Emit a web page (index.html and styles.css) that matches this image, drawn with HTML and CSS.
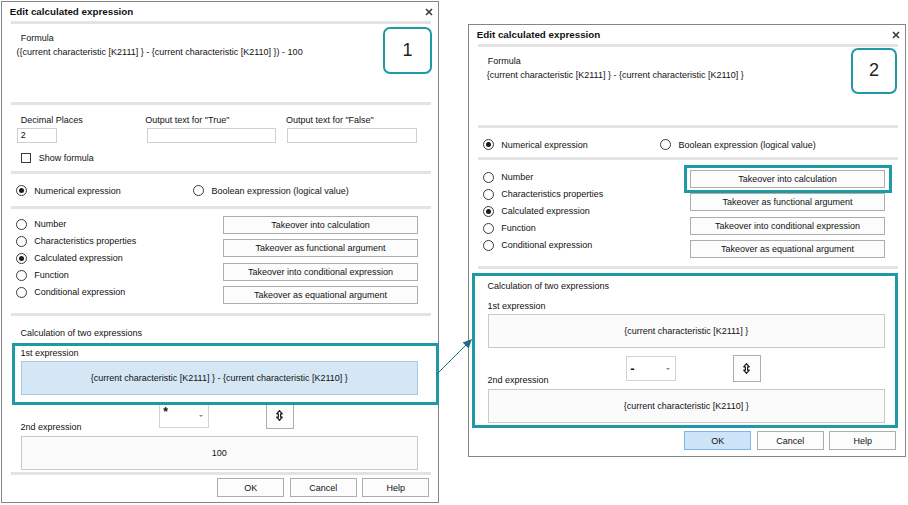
FILE: index.html
```html
<!DOCTYPE html>
<html lang="en">

<head>
    <meta charset="UTF-8">
    <meta name="viewport" content="width=device-width, initial-scale=1.0">
    <title>Edit calculated expression</title>
    <link rel="stylesheet" href="styles.css">
</head>

<body>
    <div class="desk">

        <!-- step 1 -->
        <div class="dialog dialog-one">
            <div class="titlebar">
                <span class="title">Edit calculated expression</span>
                <svg class="close" width="8" height="8" viewBox="0 0 8 8"><path d="M1 1L7 7M7 1L1 7" /></svg>
            </div>
            <div class="sep"></div>
            <div class="formula">
                <div>Formula</div>
                <div class="formula-text">({current characteristic [K2111] } - {current characteristic [K2110] }) - 100</div>
            </div>
            <div class="sep"></div>
            <div class="options">
                <div class="fields">
                    <div class="field f-dec">
                        <div class="field-label">Decimal Places</div>
                        <div class="input">2</div>
                    </div>
                    <div class="field f-true">
                        <div class="field-label">Output text for "True"</div>
                        <div class="input"></div>
                    </div>
                    <div class="field f-false">
                        <div class="field-label">Output text for "False"</div>
                        <div class="input"></div>
                    </div>
                </div>
                <div class="check"><span class="box"></span>Show formula</div>
            </div>
            <div class="sep"></div>
            <div class="kind">
                <div class="radio checked"><span class="dot"></span>Numerical expression</div>
                <div class="radio"><span class="dot"></span>Boolean expression (logical value)</div>
            </div>
            <div class="sep"></div>
            <div class="source">
                <div class="choices">
                    <div class="radio"><span class="dot"></span>Number</div>
                    <div class="radio"><span class="dot"></span>Characteristics properties</div>
                    <div class="radio checked"><span class="dot"></span>Calculated expression</div>
                    <div class="radio"><span class="dot"></span>Function</div>
                    <div class="radio"><span class="dot"></span>Conditional expression</div>
                </div>
                <div class="actions">
                    <div class="btn">Takeover into calculation</div>
                    <div class="btn">Takeover as functional argument</div>
                    <div class="btn">Takeover into conditional expression</div>
                    <div class="btn">Takeover as equational argument</div>
                </div>
            </div>
            <div class="sep"></div>
            <div class="calc">
                <div>Calculation of two expressions</div>
                <div class="calc-label">1st expression</div>
                <div class="expr active">{current characteristic [K2111] } - {current characteristic [K2110] }</div>
                <div class="mid">
                    <div class="mid-label">2nd expression</div>
                    <div class="combo"><span class="combo-value">*</span><span class="caret"></span></div>
                    <div class="btn swap">
                        <svg width="7" height="11" viewBox="0 0 7 11"><path d="M3.5 0.6L6.3 3.8H4.6V7.2H6.3L3.5 10.4L0.7 7.2H2.4V3.8H0.7Z" /></svg>
                    </div>
                </div>
                <div class="expr">100</div>
            </div>
            <div class="sep"></div>
            <div class="footer">
                <div class="btn">OK</div>
                <div class="btn">Cancel</div>
                <div class="btn">Help</div>
            </div>

            <div class="step">1</div>
            <div class="mark mark-first"></div>
        </div>

        <!-- step 2 -->
        <div class="dialog dialog-two">
            <div class="titlebar">
                <span class="title">Edit calculated expression</span>
                <svg class="close" width="8" height="8" viewBox="0 0 8 8"><path d="M1 1L7 7M7 1L1 7" /></svg>
            </div>
            <div class="sep"></div>
            <div class="formula">
                <div>Formula</div>
                <div class="formula-text">{current characteristic [K2111] } - {current characteristic [K2110] }</div>
            </div>
            <div class="sep"></div>
            <div class="kind">
                <div class="radio checked"><span class="dot"></span>Numerical expression</div>
                <div class="radio"><span class="dot"></span>Boolean expression (logical value)</div>
            </div>
            <div class="sep"></div>
            <div class="source">
                <div class="choices">
                    <div class="radio"><span class="dot"></span>Number</div>
                    <div class="radio"><span class="dot"></span>Characteristics properties</div>
                    <div class="radio checked"><span class="dot"></span>Calculated expression</div>
                    <div class="radio"><span class="dot"></span>Function</div>
                    <div class="radio"><span class="dot"></span>Conditional expression</div>
                </div>
                <div class="actions">
                    <div class="btn">Takeover into calculation</div>
                    <div class="btn">Takeover as functional argument</div>
                    <div class="btn">Takeover into conditional expression</div>
                    <div class="btn">Takeover as equational argument</div>
                </div>
            </div>
            <div class="sep"></div>
            <div class="calc">
                <div>Calculation of two expressions</div>
                <div class="calc-label">1st expression</div>
                <div class="expr">{current characteristic [K2111] }</div>
                <div class="mid">
                    <div class="mid-label">2nd expression</div>
                    <div class="combo"><span class="combo-value minus">-</span><span class="caret"></span></div>
                    <div class="btn swap">
                        <svg width="7" height="11" viewBox="0 0 7 11"><path d="M3.5 0.6L6.3 3.8H4.6V7.2H6.3L3.5 10.4L0.7 7.2H2.4V3.8H0.7Z" /></svg>
                    </div>
                </div>
                <div class="expr">{current characteristic [K2110] }</div>
            </div>
            <div class="sep"></div>
            <div class="footer">
                <div class="btn default">OK</div>
                <div class="btn">Cancel</div>
                <div class="btn">Help</div>
            </div>

            <div class="step">2</div>
            <div class="mark mark-button"></div>
            <div class="mark mark-calc"></div>
        </div>

        <svg class="arrow" width="908" height="505" viewBox="0 0 908 505">
            <line x1="436" y1="375" x2="467" y2="344" />
            <polygon points="472,339 468.6,348.4 462.6,342.4" />
        </svg>
    </div>
</body>

</html>
```

FILE: styles.css
```css
body {
    margin: 0;
    background: #fff;
    font-family: 'Liberation Sans', Arial, sans-serif;
    font-size: 9px;
    color: #111;
}

.desk {
    position: relative;
    width: 908px;
    height: 505px;
    overflow: hidden;
}

.dialog {
    position: absolute;
    box-sizing: border-box;
    width: 438px;
    border: 1px solid #858585;
    background: #fff;
    display: flex;
    flex-direction: column;
}

.dialog-one {
    left: 1px;
    top: 1px;
    height: 502px;
}

.dialog-two {
    left: 468px;
    top: 24px;
    height: 433px;
}

.titlebar {
    height: 19px;
    flex: none;
    display: flex;
    align-items: center;
    justify-content: space-between;
    padding: 0 5px 0 7.7px;
}

.title {
    font-weight: bold;
    font-size: 9.8px;
    color: #111;
}

.close path {
    stroke: #3a3a3a;
    stroke-width: 1.6;
}

.sep {
    flex: none;
    height: 3px;
    background: #e3e3e3;
    margin: 0 7px 0 9px;
}

.formula {
    flex: none;
    height: 78px;
    box-sizing: border-box;
    padding: 8px 0 0 18.7px;
    line-height: 13px;
}

.formula-text {
    margin: 0.5px 0 0 -4.2px;
}

.dialog-two .formula-text {
    margin-left: -1px;
}

/* decimal places / output texts */

.options {
    flex: none;
    height: 66px;
    box-sizing: border-box;
    padding-top: 8.5px;
    line-height: 13px;
}

.fields {
    display: grid;
    grid-template-columns: 130px 140.6px 130px;
    padding-left: 14.7px;
}

.input {
    box-sizing: border-box;
    height: 15px;
    margin-top: 1.5px;
    border: 1px solid #cfcfcf;
    background: #fff;
    padding-left: 3px;
    line-height: 13px;
}

.f-dec .field-label {
    margin-left: 4px;
}

.f-dec .input {
    width: 40px;
}

.f-true .field-label,
.f-false .field-label {
    margin-left: -1.4px;
}

.f-true .input {
    width: 129px;
}

.f-false .input {
    width: 130px;
}

.check {
    display: flex;
    align-items: center;
    margin: 8.5px 0 0 18.7px;
    height: 13px;
}

.check .box {
    width: 10px;
    height: 10px;
    box-sizing: border-box;
    border: 1px solid #3a3a3a;
    margin-right: 8px;
}

/* radios */

.radio {
    display: flex;
    align-items: center;
    height: 13px;
}

.dot {
    position: relative;
    flex: none;
    width: 11px;
    height: 11px;
    box-sizing: border-box;
    border: 1px solid #3a3a3a;
    border-radius: 50%;
    margin-right: 7.3px;
    background: #fff;
}

.radio.checked .dot::after {
    content: '';
    position: absolute;
    left: 2px;
    top: 2px;
    width: 5px;
    height: 5px;
    border-radius: 50%;
    background: #1a1a1a;
}

.kind {
    flex: none;
    height: 32px;
    box-sizing: border-box;
    padding: 10px 0 0 14px;
    display: grid;
    grid-template-columns: 177.3px auto;
}

.dialog-two .kind {
    height: 29px;
}

.source {
    flex: none;
    height: 104px;
    display: flex;
    align-items: flex-start;
}

.dialog-two .source {
    height: 106px;
}

.choices {
    box-sizing: border-box;
    width: 220.7px;
    padding: 6.5px 0 0 14px;
}

.dialog-two .choices {
    padding-top: 8.5px;
}

.choices .radio {
    height: 17px;
}

.actions {
    width: 195.6px;
    padding-top: 7px;
    display: flex;
    flex-direction: column;
    gap: 5.33px;
}

.dialog-two .actions {
    padding-top: 10px;
}

.btn {
    box-sizing: border-box;
    height: 18px;
    border: 1px solid #adadad;
    background: #fcfcfc;
    display: flex;
    align-items: center;
    justify-content: center;
    color: #111;
}

/* two expressions */

.calc {
    flex: none;
    height: 156px;
    box-sizing: border-box;
    padding: 11px 0 0 18.5px;
    line-height: 13px;
}

.calc-label {
    margin-top: 7px;
}

.expr {
    box-sizing: border-box;
    width: 397.5px;
    height: 34px;
    margin-top: 1px;
    border: 1px solid #c9c9c9;
    background: #fbfbfb;
    display: flex;
    align-items: center;
    justify-content: center;
}

.expr.active {
    background: #d5e6f5;
    border-color: #a8c9e6;
}

.mid {
    height: 40px;
    display: flex;
    align-items: flex-start;
}

.mid-label {
    width: 138.8px;
    margin-top: 26px;
}

.combo {
    box-sizing: border-box;
    width: 49.4px;
    height: 25px;
    margin-top: 8px;
    border: 1px solid #d3d3d3;
    background: #fff;
    display: flex;
    align-items: center;
    justify-content: space-between;
    padding: 0 5px 0 3px;
}

.combo-value {
    font-size: 12px;
    font-weight: bold;
    margin-top: -6px;
}

.combo-value.minus {
    margin-top: 0;
    font-size: 13px;
}

.caret {
    width: 0;
    height: 0;
    border-left: 2.5px solid transparent;
    border-right: 2.5px solid transparent;
    border-top: 2.5px solid #8a8a8a;
}

.swap {
    width: 28px;
    height: 27px;
    margin: 7px 0 0 57.3px;
}

.swap path {
    fill: #fff;
    stroke: #1b1b1b;
    stroke-width: 1.2;
    stroke-linejoin: round;
}

.footer {
    flex: 1;
    display: flex;
    justify-content: flex-end;
    gap: 5.5px;
    padding: 3px 8.7px 0 0;
}

.footer .btn {
    width: 67px;
    height: 19px;
}

.footer .btn.default {
    background: #cce4f7;
    border-color: #7fb5e6;
}

/* annotations */

.step {
    position: absolute;
    box-sizing: border-box;
    border: 2px solid #1d9aa6;
    border-radius: 7px;
    background: #fff;
    display: flex;
    align-items: center;
    justify-content: center;
    font-size: 18px;
    color: #222;
}

.dialog-one .step {
    left: 381.3px;
    top: 25px;
    width: 48.4px;
    height: 47.3px;
}

.dialog-two .step {
    left: 381.7px;
    top: 22.7px;
    width: 46.6px;
    height: 46.3px;
}

.mark {
    position: absolute;
    box-sizing: border-box;
    border: 3px solid #1d9aa6;
}

.mark-first {
    left: 10px;
    top: 341.3px;
    width: 426.7px;
    height: 61.7px;
}

.mark-button {
    left: 215px;
    top: 140px;
    width: 207.7px;
    height: 28.3px;
}

.mark-calc {
    left: 3.3px;
    top: 248.3px;
    width: 426px;
    height: 155px;
}

.arrow {
    position: absolute;
    left: 0;
    top: 0;
    pointer-events: none;
}

.arrow line {
    stroke: #236a86;
    stroke-width: 1;
}

.arrow polygon {
    fill: #236a86;
}
```
